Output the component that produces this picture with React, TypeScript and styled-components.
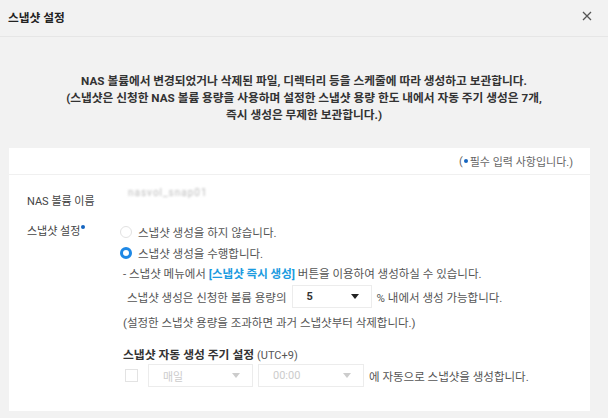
import styled, { createGlobalStyle } from 'styled-components';

const GlobalStyle = createGlobalStyle`
  html, body {
    margin: 0;
    padding: 0;
    background: #f2f2f2;
  }
  body {
    font-family: Roboto, "Noto Sans CJK KR", sans-serif;
    color: #444;
  }
`;

function App() {
  return (
    <>
      <GlobalStyle />
      <Page>
        <Header>
          <Title>스냅샷 설정</Title>
          <CloseButton aria-label="닫기">
            <svg width="10" height="10" viewBox="0 0 10 10">
              <path d="M1 1 L9 9 M9 1 L1 9" stroke="#555" strokeWidth="1.3" fill="none" />
            </svg>
          </CloseButton>
        </Header>

        <Intro>
          NAS 볼륨에서 변경되었거나 삭제된 파일, 디렉터리 등을 스케줄에 따라 생성하고 보관합니다.
          <br />
          (스냅샷은 신청한 NAS 볼륨 용량을 사용하며 설정한 스냅샷 용량 한도 내에서 자동 주기 생성은 7개,
          <br />
          즉시 생성은 무제한 보관합니다.)
        </Intro>

        <Card>
          <CardHeader>
            (<RequiredDot />필수 입력 사항입니다.)
          </CardHeader>
          <CardBody>
            <FormRow>
              <Label $offset={0}>NAS 볼륨 이름</Label>
              <BlurredValue>nasvol_snap01</BlurredValue>
            </FormRow>

            <FormRow>
              <Label $offset={2}>
                스냅샷 설정<RequiredDot $super />
              </Label>
              <Options>
                <RadioLine>
                  <Radio />
                  스냅샷 생성을 하지 않습니다.
                </RadioLine>
                <RadioLine>
                  <Radio $checked />
                  스냅샷 생성을 수행합니다.
                </RadioLine>
                <Note>
                  - 스냅샷 메뉴에서 <Highlight>[스냅샷 즉시 생성]</Highlight> 버튼을 이용하여 생성하실 수 있습니다.
                </Note>
                <InlineRow $indent={7} $top={2} $bottom={4}>
                  스냅샷 생성은 신청한 볼륨 용량의
                  <Select $width={80} $disabled={false}>
                    <span>5</span>
                    <Caret $disabled={false} />
                  </Select>
                  % 내에서 생성 가능합니다.
                </InlineRow>
                <Note>(설정한 스냅샷 용량을 조과하면 과거 스냅샷부터 삭제합니다.)</Note>

                <SubHeading>
                  스냅샷 자동 생성 주기 설정 <Utc>(UTC+9)</Utc>
                </SubHeading>
                <InlineRow $indent={5} $top={-1} $bottom={0}>
                  <Checkbox />
                  <Select $width={105} $disabled>
                    <span>매일</span>
                    <Caret $disabled />
                  </Select>
                  <Select $width={106} $disabled>
                    <span>00:00</span>
                    <Caret $disabled />
                  </Select>
                  에 자동으로 스냅샷을 생성합니다.
                </InlineRow>
              </Options>
            </FormRow>
          </CardBody>
        </Card>
      </Page>
    </>
  );
}

const Page = styled.div`
  width: 608px;
  height: 418px;
  background: #f2f2f2;
  display: flex;
  flex-direction: column;
  overflow: hidden;
`;

const Header = styled.div`
  height: 36px;
  display: flex;
  align-items: center;
  justify-content: space-between;
  padding: 0 16px 0 8px;
  border-bottom: 1px solid #e6e6e6;
  box-sizing: content-box;
`;

const Title = styled.h1`
  margin: -4px 0 0;
  font-size: 11.7px;
  font-weight: 700;
  color: #222;
`;

const CloseButton = styled.button`
  border: 0;
  background: none;
  padding: 0;
  margin-top: -4px;
  display: flex;
  cursor: pointer;
`;

const Intro = styled.p`
  margin: 36px 0 0;
  text-align: center;
  font-size: 11.7px;
  line-height: 17px;
  font-weight: 700;
  color: #333;
`;

const Card = styled.div`
  margin: 24px 18px 0 9px;
  height: 263px;
  background: #fff;
  display: flex;
  flex-direction: column;
`;

const CardHeader = styled.div`
  height: 26px;
  border-bottom: 1px solid #f0f0f0;
  display: flex;
  align-items: center;
  justify-content: flex-end;
  padding-right: 17px;
  font-size: 11px;
  color: #666;
`;

const RequiredDot = styled.span<{ $super?: boolean }>`
  display: inline-block;
  width: 4px;
  height: 4px;
  border-radius: 50%;
  background: #1565c0;
  margin: 0 2px 0 1px;
  vertical-align: ${(p) => (p.$super ? '6px' : '2px')};
`;

const CardBody = styled.div`
  padding: 18px 0 0 18px;
  display: flex;
  flex-direction: column;
  gap: 10px;
  font-size: 11.5px;
  color: #555;
`;

const FormRow = styled.div`
  display: flex;
  align-items: flex-start;
`;

const Label = styled.div<{ $offset: number }>`
  width: 93px;
  flex-shrink: 0;
  line-height: 18px;
  font-size: 11px;
  color: #444;
  padding-top: ${(p) => p.$offset}px;
`;

const BlurredValue = styled.div`
  margin-top: -9px;
  margin-left: 8px;
  color: #bbb;
  font-size: 10px;
  line-height: 18px;
  filter: blur(1.2px);
  letter-spacing: 1px;
`;

const Options = styled.div`
  display: flex;
  flex-direction: column;
`;

const RadioLine = styled.label`
  display: flex;
  align-items: center;
  gap: 6px;
  height: 21px;
  color: #555;
`;

const Radio = styled.span<{ $checked?: boolean }>`
  width: 12px;
  height: 12px;
  border-radius: 50%;
  box-sizing: border-box;
  border: ${(p) => (p.$checked ? '3.5px solid #1e88e5' : '1px solid #e2e2e2')};
  background: #fff;
`;

const Note = styled.div`
  line-height: 18px;
  margin: 2px 0 0 3px;
  color: #555;
`;

const Highlight = styled.span`
  color: #1a9be0;
  font-weight: 700;
`;

const InlineRow = styled.div<{ $indent: number; $top: number; $bottom: number }>`
  display: flex;
  align-items: center;
  gap: 5px;
  height: 23px;
  margin: ${(p) => `${p.$top}px 0 ${p.$bottom}px ${p.$indent}px`};
`;

const Select = styled.div<{ $width: number; $disabled: boolean }>`
  width: ${(p) => p.$width}px;
  height: 23px;
  box-sizing: border-box;
  border: 1px solid #ececec;
  display: flex;
  align-items: center;
  justify-content: space-between;
  padding: 0 12px 0 14px;
  font-size: 11px;
  font-weight: ${(p) => (p.$disabled ? 400 : 700)};
  color: ${(p) => (p.$disabled ? '#ccc' : '#333')};
`;

const Caret = styled.span<{ $disabled: boolean }>`
  width: 0;
  height: 0;
  border-left: 4px solid transparent;
  border-right: 4px solid transparent;
  border-top: 5px solid ${(p) => (p.$disabled ? '#ccc' : '#222')};
`;

const SubHeading = styled.div`
  margin: 14px 0 0 3px;
  font-size: 11.8px;
  font-weight: 700;
  color: #333;
  line-height: 18px;
`;

const Utc = styled.span`
  font-weight: 400;
  font-size: 11px;
  color: #555;
`;

const Checkbox = styled.span`
  width: 13px;
  height: 13px;
  box-sizing: border-box;
  border: 1px solid #e3e3e3;
  background: #fff;
  margin-right: 5px;
`;

export default App;
